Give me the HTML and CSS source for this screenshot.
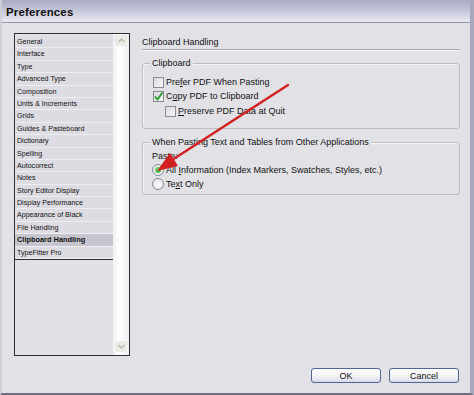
FILE: index.html
```html
<!DOCTYPE html>
<html lang="en">
<head>
  <meta charset="UTF-8" />
  <title>Preferences</title>
  <link rel="stylesheet" href="styles.css">
</head>
<body>
  <div class="window">
    <div class="titlebar">Preferences</div>

    <div class="main">
      <!-- LEFT: category list -->
      <div class="sidebar">
        <div class="list">
          <ul class="items">
            <li>General</li>
            <li>Interface</li>
            <li>Type</li>
            <li>Advanced Type</li>
            <li>Composition</li>
            <li>Units &amp; Increments</li>
            <li>Grids</li>
            <li>Guides &amp; Pasteboard</li>
            <li>Dictionary</li>
            <li>Spelling</li>
            <li>Autocorrect</li>
            <li>Notes</li>
            <li>Story Editor Display</li>
            <li>Display Performance</li>
            <li>Appearance of Black</li>
            <li>File Handling</li>
            <li class="selected">Clipboard Handling</li>
            <li>TypeFitter Pro</li>
          </ul>
          <div class="list-empty"></div>
        </div>
        <div class="scrollbar">
          <div class="scroll-btn">
            <svg width="7" height="5" viewBox="0 0 7 5"><polyline points="0.5,4 3.5,1 6.5,4" fill="none" stroke="#b4b4a8" stroke-width="1.2"/></svg>
          </div>
          <div class="scroll-btn">
            <svg width="7" height="5" viewBox="0 0 7 5"><polyline points="0.5,1 3.5,4 6.5,1" fill="none" stroke="#b4b4a8" stroke-width="1.2"/></svg>
          </div>
        </div>
      </div>

      <!-- RIGHT: settings -->
      <div class="panel">
        <div class="panel-title">Clipboard Handling</div>

        <div class="group group-clipboard">
          <div class="group-title">Clipboard</div>
          <div class="option">
            <span class="check"></span>
            <span>Pre<u>f</u>er PDF When Pasting</span>
          </div>
          <div class="option">
            <span class="check">
              <svg width="11" height="11" viewBox="0 0 11 11"><polyline points="2,5.5 4.5,8.5 9.5,1.5" fill="none" stroke="#1f9a1f" stroke-width="1.8"/></svg>
            </span>
            <span>C<u>o</u>py PDF to Clipboard</span>
          </div>
          <div class="option indent">
            <span class="check"></span>
            <span><u>P</u>reserve PDF Data at Quit</span>
          </div>
        </div>

        <div class="group group-paste">
          <div class="group-title">When Pasting Text and Tables from Other Applications</div>
          <div class="paste-label">Paste:</div>
          <div class="option">
            <span class="radio on"></span>
            <span>All <u>I</u>nformation (Index Markers, Swatches, Styles, etc.)</span>
          </div>
          <div class="option">
            <span class="radio"></span>
            <span>Te<u>x</u>t Only</span>
          </div>
        </div>
      </div>
    </div>

    <div class="footer">
      <button class="btn">OK</button>
      <button class="btn">Cancel</button>
    </div>

    <!-- red annotation arrow -->
    <svg class="arrow" width="474" height="395" viewBox="0 0 474 395">
      <line x1="288" y1="85" x2="172" y2="160" stroke="#d22020" stroke-width="2.4" stroke-linecap="round"/>
      <polygon points="157,171 178,166 170,153" fill="#d22020"/>
    </svg>
  </div>
</body>
</html>
```

FILE: styles.css
```css
body {
  margin: 0;
  font-family: "Liberation Sans", Arial, sans-serif;
  color: #111;
}

.window {
  position: relative;
  width: 474px;
  height: 395px;
  box-sizing: border-box;
  background-color: #e2e1e6;
  border-left: 2px solid #cfcfd8;
  border-right: 4px solid #a7a8bc;
  border-bottom: 2px solid #6f6f7e;
  display: flex;
  flex-direction: column;
}

.titlebar {
  height: 22px;
  line-height: 24px;
  padding-left: 4px;
  font-size: 11.4px;
  font-weight: bold;
  letter-spacing: 0.2px;
  background: linear-gradient(#a9abc3, #c3c4d6 45%, #ebebf2);
  border-bottom: 1px solid #9394a6;
}

.main {
  display: flex;
  gap: 12px;
  padding: 10px 0 0 12px;
}

/* category list */
.sidebar {
  width: 116px;
  height: 323px;
  box-sizing: border-box;
  border: 1px solid #2e2e33;
  display: flex;
}

.list {
  flex: 1;
  display: flex;
  flex-direction: column;
  padding-top: 2px;
}

.items {
  list-style: none;
  margin: 0;
  padding: 0;
}

.items li {
  height: 12.4px;
  line-height: 12.4px;
  box-sizing: border-box;
  padding-left: 2px;
  font-size: 7.1px;
  background-color: #dddce2;
  border-bottom: 1px solid #eeedf1;
  white-space: nowrap;
}

.items li.selected {
  background-color: #c6c5cd;
  font-weight: bold;
  font-size: 7.4px;
}

.list-empty {
  flex: 1;
  border-top: 1px solid #2e2e33;
  background-color: #e1e0e5;
}

.scrollbar {
  width: 16px;
  background: linear-gradient(to right, #f1f1f4, #ffffff 40%, #efeff2);
  display: flex;
  flex-direction: column;
  justify-content: space-between;
  align-items: center;
  padding: 1px 0 3px;
}

.scroll-btn {
  width: 12px;
  height: 11px;
  background-color: #ebebe5;
  border-radius: 2px;
  display: flex;
  align-items: center;
  justify-content: center;
}

/* right panel */
.panel {
  width: 318px;
  font-size: 9px;
}

.panel-title {
  padding-top: 3px;
  line-height: 12px;
  padding-bottom: 1px;
  border-bottom: 1px solid #a9a9b1;
  box-shadow: 0 1px 0 #f4f4f6;
}

.group {
  border: 1px solid #bdbdc3;
  border-radius: 3px;
  box-shadow: inset 1px 1px 0 #f4f4f6;
  padding: 0 0 0 9px;
}

.group-clipboard {
  margin-top: 13px;
  padding-bottom: 10px;
}

.group-paste {
  margin-top: 13px;
  padding-bottom: 3px;
}

.group-title {
  width: fit-content;
  margin: -7px 0 0 -2px;
  padding: 0 2px;
  line-height: 12px;
  background-color: #e2e1e6;
}

.group-clipboard .group-title {
  margin-bottom: 6px;
}

.paste-label {
  line-height: 12px;
  margin: 2px 0 1px;
}

.option {
  display: flex;
  align-items: center;
  gap: 2px;
  height: 14px;
  white-space: nowrap;
}

.option.indent {
  padding-left: 12px;
  margin-top: 1px;
}

.check {
  width: 11px;
  height: 11px;
  box-sizing: border-box;
  margin-left: 1px;
  border: 1px solid #8b8b95;
  background: linear-gradient(135deg, #d9d9df, #f7f7f8);
  display: flex;
  align-items: center;
  justify-content: center;
}

.check svg {
  margin: -1px;
}

.radio {
  width: 12px;
  height: 12px;
  box-sizing: border-box;
  border: 1px solid #8b8b95;
  border-radius: 50%;
  background: radial-gradient(circle at 60% 60%, #ffffff, #dcdce2);
  display: flex;
  align-items: center;
  justify-content: center;
}

.radio.on::after {
  content: "";
  width: 6px;
  height: 6px;
  border-radius: 50%;
  background: radial-gradient(circle at 35% 35%, #7fe07f, #1d9a1d);
}

u {
  text-decoration: underline;
  text-underline-offset: 1px;
}

/* buttons */
.footer {
  display: flex;
  justify-content: flex-end;
  gap: 8px;
  padding: 12px 11px 0 0;
}

.btn {
  width: 70px;
  height: 15px;
  padding: 0;
  font-family: "Liberation Sans", Arial, sans-serif;
  font-size: 9px;
  color: #111;
  border: 1px solid #52648f;
  border-radius: 3px;
  background: linear-gradient(#ffffff, #f1f1f4 60%, #d6dbea);
}

.arrow {
  position: absolute;
  left: -2px;
  top: 0;
  pointer-events: none;
}
```
